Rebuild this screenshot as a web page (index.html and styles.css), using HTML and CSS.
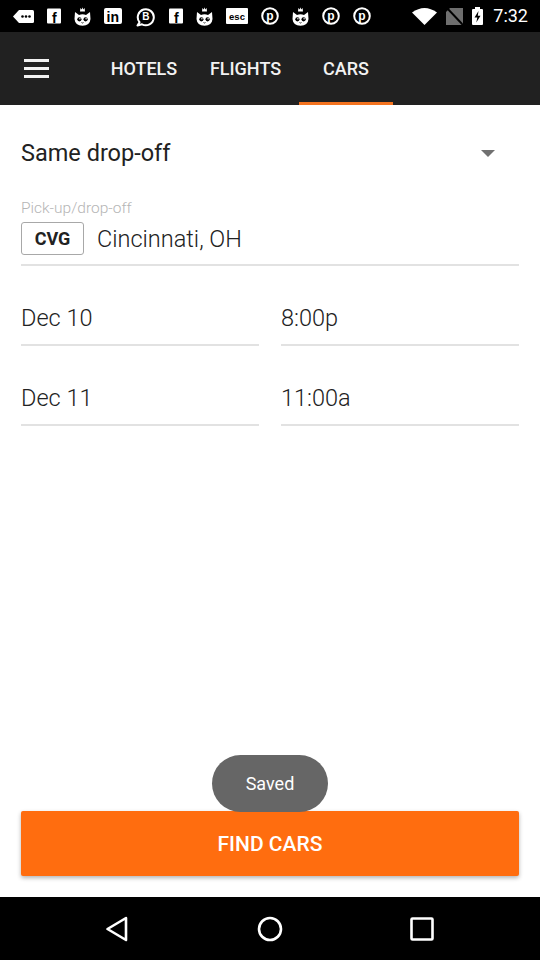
FILE: index.html
```html
<!DOCTYPE html>
<html>
<head>
<meta charset="utf-8">
<link rel="stylesheet" href="styles.css">
</head>
<body>
<div class="screen">
  <div class="status">
    <div class="status-left">
      <svg class="ic" width="21" height="13" viewBox="0 0 21 13"><path d="M6 0H19.5a1.5 1.5 0 0 1 1.5 1.5v10a1.5 1.5 0 0 1-1.5 1.5H6L0 6.5Z" fill="#fff"/><circle cx="9.5" cy="6.5" r="1.3" fill="#000"/><circle cx="13" cy="6.5" r="1.3" fill="#000"/><circle cx="16.5" cy="6.5" r="1.3" fill="#000"/></svg>
      <svg class="ic" width="14" height="22" viewBox="0 0 14 22"><rect y="3.5" width="14" height="15" rx="1" fill="#fff"/><text x="5" y="18" font-family="Liberation Sans, sans-serif" font-weight="700" font-size="14" fill="#000">f</text></svg>
      <svg class="ic" width="17" height="19" viewBox="0 0 17 19"><path d="M6 4.5 6.4 1 7.8 2.6 8.5 0.3 9.2 2.6 10.6 1 11 4.5Z" fill="#fff"/><path d="M1 5 L5 8 Q8.5 6.6 12 8 L16 5 L16.5 12 Q16 18.5 8.5 18.8 Q1 18.5 0.5 12Z" fill="#fff"/><circle cx="5.4" cy="12.3" r="2.1" fill="#000"/><circle cx="11.6" cy="12.3" r="2.1" fill="#000"/><circle cx="5.9" cy="11.7" r="0.7" fill="#fff"/><circle cx="12.1" cy="11.7" r="0.7" fill="#fff"/><path d="M7.5 15.5 Q8.5 16.5 9.5 15.5" stroke="#000" stroke-width="0.8" fill="none"/></svg>
      <svg class="ic" width="18" height="16" viewBox="0 0 18 16"><rect width="18" height="16" rx="2" fill="#fff"/><text x="2.5" y="14" font-family="Liberation Sans, sans-serif" font-weight="700" font-size="14" fill="#000">in</text></svg>
      <svg class="ic" width="21" height="21" viewBox="0 0 21 21"><path d="M4.5 16.2 A8 8 0 1 1 7 18.3 L2.5 19.5Z" fill="none" stroke="#fff" stroke-width="2" stroke-linejoin="round"/><text x="7.3" y="14" font-family="Liberation Sans, sans-serif" font-weight="700" font-size="10" fill="#fff">B</text></svg>
      <svg class="ic" width="14" height="22" viewBox="0 0 14 22"><rect y="3.5" width="14" height="15" rx="1" fill="#fff"/><text x="5" y="18" font-family="Liberation Sans, sans-serif" font-weight="700" font-size="14" fill="#000">f</text></svg>
      <svg class="ic" width="17" height="19" viewBox="0 0 17 19"><path d="M6 4.5 6.4 1 7.8 2.6 8.5 0.3 9.2 2.6 10.6 1 11 4.5Z" fill="#fff"/><path d="M1 5 L5 8 Q8.5 6.6 12 8 L16 5 L16.5 12 Q16 18.5 8.5 18.8 Q1 18.5 0.5 12Z" fill="#fff"/><circle cx="5.4" cy="12.3" r="2.1" fill="#000"/><circle cx="11.6" cy="12.3" r="2.1" fill="#000"/><circle cx="5.9" cy="11.7" r="0.7" fill="#fff"/><circle cx="12.1" cy="11.7" r="0.7" fill="#fff"/><path d="M7.5 15.5 Q8.5 16.5 9.5 15.5" stroke="#000" stroke-width="0.8" fill="none"/></svg>
      <svg class="ic" width="22" height="16" viewBox="0 0 22 16"><rect width="22" height="16" rx="1" fill="#fff"/><text x="11" y="11.5" text-anchor="middle" font-family="Liberation Sans, sans-serif" font-weight="700" font-size="9.5" fill="#000">esc</text></svg>
      <svg class="ic" width="18" height="18" viewBox="0 0 18 18"><circle cx="9" cy="9" r="7.8" fill="none" stroke="#fff" stroke-width="2"/><text x="9" y="13.3" text-anchor="middle" font-family="Liberation Sans, sans-serif" font-weight="700" font-size="12" fill="#fff">p</text></svg>
      <svg class="ic" width="17" height="19" viewBox="0 0 17 19"><path d="M6 4.5 6.4 1 7.8 2.6 8.5 0.3 9.2 2.6 10.6 1 11 4.5Z" fill="#fff"/><path d="M1 5 L5 8 Q8.5 6.6 12 8 L16 5 L16.5 12 Q16 18.5 8.5 18.8 Q1 18.5 0.5 12Z" fill="#fff"/><circle cx="5.4" cy="12.3" r="2.1" fill="#000"/><circle cx="11.6" cy="12.3" r="2.1" fill="#000"/><circle cx="5.9" cy="11.7" r="0.7" fill="#fff"/><circle cx="12.1" cy="11.7" r="0.7" fill="#fff"/><path d="M7.5 15.5 Q8.5 16.5 9.5 15.5" stroke="#000" stroke-width="0.8" fill="none"/></svg>
      <svg class="ic" width="18" height="18" viewBox="0 0 18 18"><circle cx="9" cy="9" r="7.8" fill="none" stroke="#fff" stroke-width="2"/><text x="9" y="13.3" text-anchor="middle" font-family="Liberation Sans, sans-serif" font-weight="700" font-size="12" fill="#fff">p</text></svg>
      <svg class="ic" width="18" height="18" viewBox="0 0 18 18"><circle cx="9" cy="9" r="7.8" fill="none" stroke="#fff" stroke-width="2"/><text x="9" y="13.3" text-anchor="middle" font-family="Liberation Sans, sans-serif" font-weight="700" font-size="12" fill="#fff">p</text></svg>
    </div>
    <div class="status-right">
      <svg width="25" height="17" viewBox="0 0 25 17"><path d="M0 4.5 Q12.5 -4.5 25 4.5 L12.5 17Z" fill="#fff"/></svg>
      <svg width="17" height="17" viewBox="0 0 17 17"><path d="M4 0H17V17H0V4Z" fill="#6e6e6e"/><path d="M1 0 L17 17" stroke="#000" stroke-width="2"/></svg>
      <svg width="11" height="18" viewBox="0 0 11 18"><rect x="3" y="0" width="5" height="2" fill="#fff"/><rect x="0" y="2" width="11" height="16" rx="1" fill="#fff"/><path d="M6.5 4 L2.5 10.5 H5.3 L4.3 15.5 L8.5 8.8 H5.8Z" fill="#000"/></svg>
      <span class="time">7:32</span>
    </div>
  </div>

  <div class="appbar">
    <div class="menu"><span></span><span></span><span></span></div>
    <div class="tabs">
      <div class="tab tab-hotels">HOTELS</div>
      <div class="tab tab-flights">FLIGHTS</div>
      <div class="tab tab-cars active">CARS</div>
    </div>
  </div>

  <div class="content">
    <div class="dropdown">
      <span class="dropdown-text">Same drop-off</span>
      <span class="caret"></span>
    </div>

    <div class="field-label">Pick-up/drop-off</div>
    <div class="location">
      <span class="code">CVG</span>
      <span class="city">Cincinnati, OH</span>
    </div>

    <div class="row">
      <div class="cell">Dec 10</div>
      <div class="cell">8:00p</div>
    </div>
    <div class="row">
      <div class="cell">Dec 11</div>
      <div class="cell">11:00a</div>
    </div>

    <button class="find">FIND CARS</button>
    <div class="toast">Saved</div>
  </div>

  <div class="navbar">
    <svg width="24" height="26" viewBox="0 0 24 26"><path d="M21 2 L2.5 13 L21 24Z" fill="none" stroke="#fff" stroke-width="2.6" stroke-linejoin="round"/></svg>
    <svg width="26" height="26" viewBox="0 0 26 26"><circle cx="13" cy="13" r="11" fill="none" stroke="#fff" stroke-width="2.6"/></svg>
    <svg width="24" height="24" viewBox="0 0 24 24"><rect x="1.5" y="1.5" width="21" height="21" rx="1" fill="none" stroke="#fff" stroke-width="2.6"/></svg>
  </div>
</div>
</body>
</html>
```

FILE: styles.css
```css
* { box-sizing: border-box; }
html, body { margin: 0; padding: 0; }
body {
  width: 540px;
  height: 960px;
  font-family: Roboto, "Noto Sans", sans-serif;
  background: #fff;
  overflow: hidden;
}
.screen {
  display: flex;
  flex-direction: column;
  height: 960px;
}
.status {
  height: 32px;
  background: #000;
  display: flex;
  align-items: center;
  justify-content: space-between;
  padding: 0 12px 0 13px;
}
.status-left {
  display: flex;
  align-items: center;
  gap: 13px;
}
.status-right {
  display: flex;
  align-items: center;
  gap: 9px;
}
.ic { display: block; }
.time {
  color: #fff;
  font-size: 18px;
  line-height: 32px;
  margin-left: 1px;
}
.appbar {
  height: 73px;
  background: #212121;
  display: flex;
  align-items: stretch;
  padding-left: 24px;
}
.menu {
  width: 25px;
  display: flex;
  flex-direction: column;
  justify-content: center;
  gap: 5px;
}
.menu span {
  display: block;
  height: 3px;
  background: #f2f2f2;
}
.tabs {
  display: flex;
  margin-left: 47px;
}
.tab {
  color: #f2f2f2;
  font-size: 18px;
  font-weight: 500;
  display: flex;
  align-items: center;
  justify-content: center;
}
.tab-hotels { width: 96px; }
.tab-flights { width: 107px; }
.tab-cars { width: 94px; }
.tab.active {
  border-bottom: 3px solid #f4731f;
  padding-top: 3px;
}
.content {
  position: relative;
  flex: 1;
  display: flex;
  flex-direction: column;
  padding: 0 21px;
}
.dropdown {
  margin-top: 28px;
  height: 40px;
  display: flex;
  align-items: center;
  justify-content: space-between;
  padding-right: 24px;
}
.dropdown-text {
  font-size: 23.5px;
  color: #222;
}
.caret {
  width: 0;
  height: 0;
  border-left: 7px solid transparent;
  border-right: 7px solid transparent;
  border-top: 7px solid #707070;
}
.field-label {
  margin-top: 26px;
  font-size: 15.5px;
  font-weight: 300;
  line-height: 18px;
  color: #b5b5b5;
}
.location {
  margin-top: 5px;
  display: flex;
  align-items: center;
  padding-bottom: 9px;
  border-bottom: 2px solid #e2e2e2;
}
.code {
  height: 33px;
  width: 63px;
  border: 1px solid #a8a8a8;
  border-radius: 3px;
  display: flex;
  align-items: center;
  justify-content: center;
  font-weight: 700;
  font-size: 18px;
  color: #222;
}
.city {
  margin-left: 13px;
  font-size: 23.5px;
  font-weight: 300;
  color: #222;
}
.row {
  margin-top: 37px;
  display: grid;
  grid-template-columns: 1fr 1fr;
  column-gap: 22px;
}
.cell {
  font-size: 23.5px;
  font-weight: 300;
  color: #222;
  line-height: 30px;
  padding-bottom: 11px;
  border-bottom: 2px solid #e2e2e2;
}
.find {
  margin-top: auto;
  margin-bottom: 21px;
  height: 65px;
  border: none;
  border-radius: 2px;
  background: #ff6d0f;
  color: #fff;
  font-family: Roboto, sans-serif;
  font-size: 21px;
  font-weight: 500;
  box-shadow: 0 2px 4px rgba(0,0,0,0.3);
}
.toast {
  position: absolute;
  left: 212px;
  top: 650px;
  width: 116px;
  height: 57px;
  border-radius: 29px;
  background: #666;
  color: #fff;
  font-size: 18px;
  display: flex;
  align-items: center;
  justify-content: center;
}
.navbar {
  height: 63px;
  background: #000;
  display: flex;
  align-items: center;
  justify-content: space-between;
  padding: 0 106px 0 105px;
}
.navbar svg { display: block; }
```
